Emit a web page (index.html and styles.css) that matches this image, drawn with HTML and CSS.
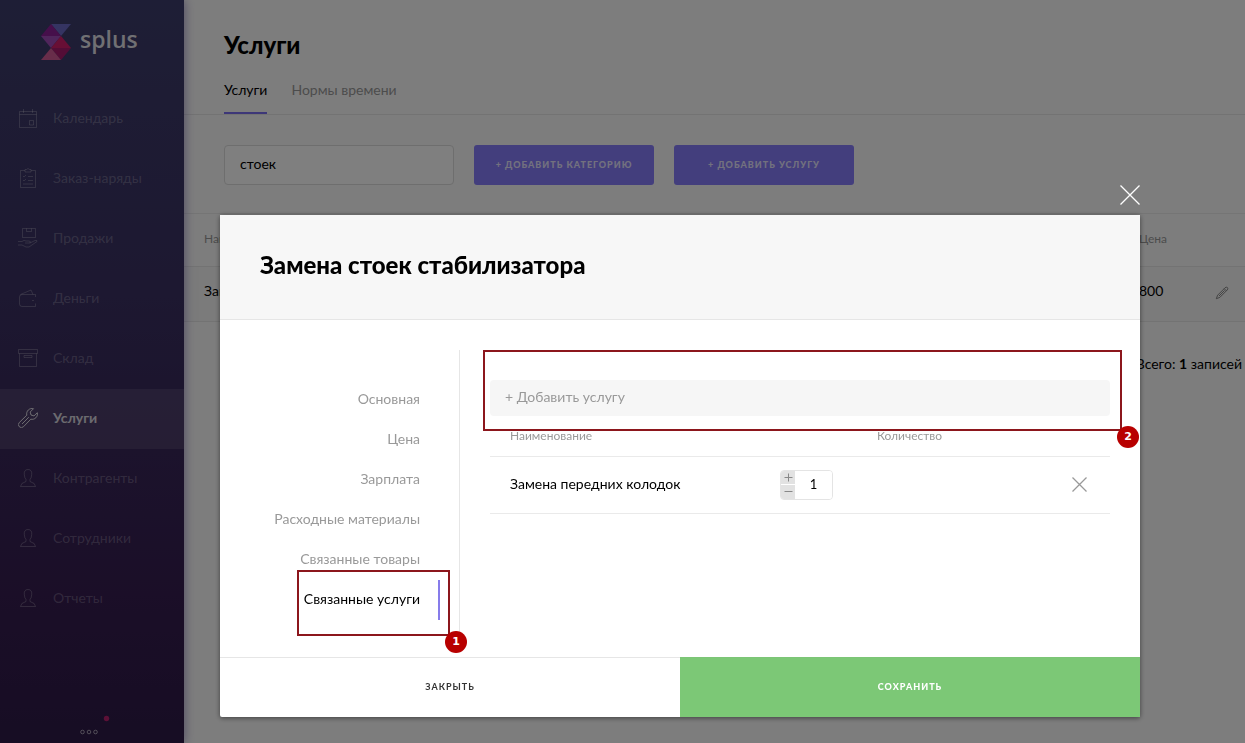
FILE: index.html
```html
<!DOCTYPE html>
<html lang="ru">
<head>
<meta charset="utf-8">
<title>Услуги</title>
<link rel="stylesheet" href="styles.css">
</head>
<body>
<div class="app">
  <aside class="sidebar">
    <a class="logo" href="#">
      <svg class="logo-mark" viewBox="0 0 30 36" aria-hidden="true">
        <path fill="#6a68c4" d="M10 0H30L20 12z"/>
        <path fill="#8c1e96" d="M10 0L20 12H0z"/>
        <path fill="#a04ab8" d="M0 12H20L10 24z"/>
        <path fill="#d01e6a" d="M20 12L30 24H10z"/>
        <path fill="#a81a6c" d="M10 24H30L20 36z"/>
        <path fill="#d05a94" d="M10 24L20 36H0z"/>
      </svg>
      <span>splus</span>
    </a>
    <nav class="menu">
      <a class="menu-item" href="#"><svg class="icon" viewBox="0 0 20 20"><path d="M1.500 3.500H18.500V19.500H1.500zM1.500 6.500H18.500M5.500 1V5M14.500 1V5M11.500 12.500H15.500V17H11.500z"/></svg>Календарь</a>
      <a class="menu-item" href="#"><svg class="icon" viewBox="0 0 20 20"><path d="M7 2.500H2.500V19.500H17.500V2.500H13M7 1.500H8.500Q10 -.5 11.500 1.500H13V4H7zM5 8l1 1 2-2M10 8.500H15M5 12l1 1 2-2M10 12.500H15M5 16H15"/></svg>Заказ-наряды</a>
      <a class="menu-item" href="#"><svg class="icon" viewBox="0 0 20 20"><path d="M4.500 .5H17.500V9.500H4.500zM8.500 .5V3.500H13.500V.5M0 13.500H4Q6 11.500 8 13H11Q13 13 12 15H7M12 15L17 12.500Q19.500 12 19 13.500L11 19H8L4 17H0"/></svg>Продажи</a>
      <a class="menu-item" href="#"><svg class="icon" viewBox="0 0 20 20"><path d="M17.500 9V6.500H4Q1.500 6.500 1.500 9V16Q1.500 18.500 4 18.500H17.500V15.500M2.500 6.500L13 2L15 6.500M14 12.500h2"/></svg>Деньги</a>
      <a class="menu-item" href="#"><svg class="icon" viewBox="0 0 20 20"><path d="M.5 1.500H19.500V5.500H.5zM1.500 5.500V18.500H18.500V5.500M6 7.500H14V9.500H6z"/></svg>Склад</a>
      <a class="menu-item is-active" href="#"><svg class="icon" viewBox="0 0 20 20"><path d="M15.500 .7A5.400 5.400 0 0 0 8.800 7.200L1.300 14.500A2.900 2.900 0 0 0 5.500 18.700L12.800 11.200A5.400 5.400 0 0 0 19.300 4.700L16 7.900L13 7L12.200 4zM10.800 9.200L4 16"/></svg>Услуги</a>
      <a class="menu-item" href="#"><svg class="icon" viewBox="0 0 20 20"><path d="M10 1.500C7 1.500 6 3.500 6.300 6.500Q6.500 10 8 11.500V13.500Q2.500 15 2.500 18.500H17.500Q17.500 15 12 13.500V11.500Q13.500 10 13.700 6.500C14 3.500 13 1.500 10 1.500z"/></svg>Контрагенты</a>
      <a class="menu-item" href="#"><svg class="icon" viewBox="0 0 20 20"><path d="M10 1.500C7 1.500 6 3.500 6.300 6.500Q6.500 10 8 11.500V13.500Q2.500 15 2.500 18.500H17.500Q17.500 15 12 13.500V11.500Q13.500 10 13.700 6.500C14 3.500 13 1.500 10 1.500z"/></svg>Сотрудники</a>
      <a class="menu-item" href="#"><svg class="icon" viewBox="0 0 20 20"><path d="M10 1.500C7 1.500 6 3.500 6.300 6.500Q6.500 10 8 11.500V13.500Q2.500 15 2.500 18.500H17.500Q17.500 15 12 13.500V11.500Q13.500 10 13.700 6.500C14 3.500 13 1.500 10 1.500z"/></svg>Отчеты</a>
    </nav>
    <button class="more" type="button" aria-label="Ещё">
      <svg viewBox="0 0 32 22" aria-hidden="true"><circle class="more-alert" cx="27.500" cy="3.500" r="2.700"/><g class="more-dots"><circle cx="3.500" cy="17" r="1.800"/><circle cx="10" cy="17" r="1.800"/><circle cx="16.500" cy="17" r="1.800"/></g></svg>
    </button>
  </aside>

  <main class="page">
    <header class="page-head">
      <h1>Услуги</h1>
      <nav class="tabs">
        <a class="tab is-active" href="#">Услуги</a>
        <a class="tab" href="#">Нормы времени</a>
      </nav>
    </header>
    <div class="toolbar">
      <input class="search" type="text" value="стоек" aria-label="Поиск">
      <button class="btn" type="button">+ Добавить категорию</button>
      <button class="btn" type="button">+ Добавить услугу</button>
    </div>
    <table class="list">
      <thead><tr><th>Наименование</th><th class="col-price">Цена</th><th class="col-edit"></th></tr></thead>
      <tbody><tr><td>Замена стоек стабилизатора</td><td>800</td><td class="edit-cell"><button class="icon-btn" type="button" aria-label="Изменить"><svg class="pencil" viewBox="0 0 16 16"><path d="M1.500 14.500L3 10.500L11.500 2Q13 .8 14.200 1.800Q15.200 3 14 4.500L5.500 13zM10.500 3L13 5.500M4.500 11.500L11 5"/></svg></button></td></tr></tbody>
    </table>
    <p class="total">Всего: <b>1</b> записей</p>
  </main>
</div>

<div class="overlay">
  <button class="close" type="button" aria-label="Закрыть окно"><svg viewBox="0 0 20 20"><path d="M.5 .5L19.500 19.500M19.500 .5L.5 19.500"/></svg></button>
  <section class="modal" role="dialog" aria-labelledby="modal-title">
    <header class="modal-head"><h2 id="modal-title">Замена стоек стабилизатора</h2></header>
    <div class="modal-body">
      <nav class="sections">
        <a class="section" href="#">Основная</a>
        <a class="section" href="#">Цена</a>
        <a class="section" href="#">Зарплата</a>
        <a class="section" href="#">Расходные материалы</a>
        <a class="section" href="#">Связанные товары</a>
        <a class="section is-active" href="#">Связанные услуги<span class="mark mark-section"><span class="mark-num">1</span></span></a>
      </nav>
      <div class="content">
        <div class="add">
          <input class="add-input" type="text" placeholder="+ Добавить услугу" aria-label="Добавить услугу">
          <span class="mark mark-add"><span class="mark-num">2</span></span>
        </div>
        <table class="linked">
          <thead><tr><th>Наименование</th><th class="col-qty">Количество</th><th class="col-del"></th></tr></thead>
          <tbody><tr>
            <td>Замена передних колодок</td>
            <td class="qty-cell"><div class="stepper">
              <div class="stepper-btns"><button type="button" aria-label="Больше"><svg viewBox="0 0 9 9"><path d="M.5 4.500H8.500M4.500 .5V8.500"/></svg></button><button type="button" aria-label="Меньше"><svg viewBox="0 0 9 9"><path d="M.5 4.500H8.500"/></svg></button></div>
              <input type="text" value="1" aria-label="Количество">
            </div></td>
            <td class="del-cell"><button class="icon-btn" type="button" aria-label="Удалить"><svg class="cross" viewBox="0 0 15 15"><path d="M.5 .5L14.500 14.500M14.500 .5L.5 14.500"/></svg></button></td>
          </tr></tbody>
        </table>
      </div>
    </div>
    <footer class="modal-foot">
      <button class="foot-btn" type="button">Закрыть</button>
      <button class="foot-btn is-primary" type="button">Сохранить</button>
    </footer>
  </section>
</div>
</body>
</html>
```
FILE: styles.css
```css
* { box-sizing: border-box; }

body {
  margin: 0;
  font: 14px/20px Lato, "Liberation Sans", sans-serif;
  color: #000;
  background: #fbfbfb;
  overflow: hidden;
}

h1, h2, p { margin: 0; }
a { color: inherit; text-decoration: none; }
button, input { font: inherit; color: inherit; }
button { border: 0; padding: 0; background: none; }
svg { display: block; fill: none; stroke: currentColor; }
table { width: 100%; border-collapse: collapse; }
th { font-size: 12px; font-weight: 400; color: #999; }
th, td { padding: 0; text-align: left; }

.app { display: flex; min-height: 100vh; }

/* Sidebar */
.sidebar {
  position: relative;
  z-index: 1;
  flex: none;
  width: 184px;
  display: flex;
  flex-direction: column;
  color: #fff;
  background: linear-gradient(#3d3d6c, #3a3062 40%, #361d50 80%, #2e1a48);
  box-shadow: 0 0 10px rgba(90, 70, 160, .6);
}
.logo {
  height: 89px;
  padding: 24px 0 0 41px;
  display: flex;
  gap: 9px;
  font: 600 23px/30px "Open Sans", sans-serif;
  color: rgba(255, 255, 255, .85);
}
.logo-mark { width: 30px; height: 36px; stroke: none; }
.menu-item {
  height: 60px;
  padding: 0 0 2px 18px;
  display: flex;
  align-items: center;
  gap: 15px;
  color: rgba(255, 255, 255, .24);
}
.menu-item.is-active {
  color: rgba(255, 255, 255, .8);
  font-weight: 700;
  background: rgba(255, 255, 255, .1);
}
.icon { width: 20px; height: 20px; }
.more { margin: auto auto 6px 79px; }
.more svg { width: 32px; height: 22px; }
.more-alert { fill: #b8206c; stroke: none; }
.more-dots { color: rgba(255, 255, 255, .55); }

/* Page */
.page { flex: 1; min-width: 0; }
.page-head {
  padding: 29px 40px 0;
  border-bottom: 1px solid #e6e6e6;
}
h1, h2 { font-size: 24px; line-height: 32px; font-weight: 900; }
.tabs { display: flex; gap: 24px; margin-top: 19px; }
.tab { padding-bottom: 12px; color: #999; }
.tab.is-active { color: #000; border-bottom: 2px solid #7a6ff0; }
.toolbar { display: flex; gap: 20px; padding: 30px 40px 28px; }
.search {
  width: 230px;
  height: 40px;
  padding: 0 15px 3px;
  border: 1px solid #dcdcdc;
  border-radius: 4px;
  background: #fff;
}
.btn {
  width: 180px;
  height: 40px;
  border-radius: 3px;
  background: #877cfa;
  color: rgba(255, 255, 255, .8);
}
.btn, .foot-btn {
  font-size: 9px;
  font-weight: 900;
  letter-spacing: 1px;
  text-transform: uppercase;
}
.list { border-top: 1px solid #eaeaea; }
.list th { height: 53px; padding-bottom: 2px; }
.list td { height: 55px; padding-bottom: 6px; background: #f6f6f6; border: solid #e6e6e6; border-width: 1px 0; }
.list .edit-cell { padding-bottom: 2px; }
.list th:first-child, .list td:first-child { padding-left: 20px; }
.col-price { width: 76px; }
.col-edit { width: 30px; }
.icon-btn { display: block; color: #999; }
.edit-cell .icon-btn { color: #777; }
.pencil { width: 14px; height: 14px; }
.total { padding: 32px 3px 0; text-align: right; }

/* Modal */
.overlay {
  position: fixed;
  inset: 0;
  z-index: 2;
  padding: 185px 105px 26px 220px;
  background: rgba(0, 0, 0, .5);
}
.close { display: block; margin: 0 0 10px auto; color: #fff; }
.close svg { width: 20px; height: 20px; stroke-width: 1.300; }
.modal {
  background: #fff;
  border-radius: 2px;
  box-shadow: 0 1px 5px rgba(0, 0, 0, .5);
}
.modal-head {
  padding: 34px 40px 38px;
  background: #f7f7f7;
  border-bottom: 1px solid #e6e6e6;
}
.modal-body { display: flex; padding: 30px 30px 17px 0; }
.sections {
  flex: none;
  width: 240px;
  padding: 30px 19px 20px 0;
  border-right: 1px solid #e6e6e6;
}
.section {
  position: relative;
  display: block;
  padding: 9px 18px 11px 0;
  border-right: 2px solid transparent;
  text-align: right;
  color: #999;
}
.section.is-active { color: #000; border-color: #877cea; }
.content { flex: 1; margin: 30px 0 0 30px; }
.add { position: relative; }
.add-input {
  display: block;
  width: 100%;
  height: 36px;
  padding: 0 15px 3px;
  border: 0;
  border-radius: 4px;
  background: #f6f6f6;
}
.add-input::placeholder { color: #999; opacity: 1; }
.linked th { height: 40px; border-bottom: 1px solid #eaeaea; }
.linked td { height: 57px; border-bottom: 1px solid #eaeaea; }
.linked th:first-child, .linked td:first-child { padding-left: 20px; }
.linked td:first-child { padding-bottom: 2px; }
.col-qty { width: 259px; text-align: center; }
.col-del { width: 71px; }
.del-cell { padding-left: 33px; }
.cross { width: 15px; height: 15px; stroke-width: 1.300; }
.stepper {
  width: 53px;
  height: 30px;
  display: flex;
  border: 1px solid #e4e4e4;
  border-radius: 4px;
  overflow: hidden;
}
.stepper-btns { display: flex; flex-direction: column; gap: 1px; width: 14px; }
.stepper-btns button { flex: 1; display: grid; place-items: center; background: #e2e2e2; color: #888; }
.stepper-btns svg { width: 9px; height: 9px; }
.stepper input { flex: 1; min-width: 0; padding: 0 0 2px; border: 0; text-align: center; font-size: 13px; }
.modal-foot { display: flex; }
.foot-btn { flex: 1; height: 60px; padding-bottom: 2px; border-top: 1px solid #e6e6e6; font-weight: 700; color: #333; }
.foot-btn.is-primary { font-weight: 900; border-color: #7cc576; background: #7cc876; color: #fff; }

/* Numbered callouts */
.mark { position: absolute; border: 2px solid #8c161c; pointer-events: none; }
.mark-section { inset: -10px -12px -16px auto; width: 153px; }
.mark-add { inset: -30px -12px -15px -7px; }
.mark-num {
  position: absolute;
  right: -19px;
  bottom: -19px;
  width: 22px;
  height: 22px;
  border-radius: 50%;
  background: #b80000;
  color: #fff;
  font: 700 11px/22px "DejaVu Sans", sans-serif;
  text-align: center;
}
```
